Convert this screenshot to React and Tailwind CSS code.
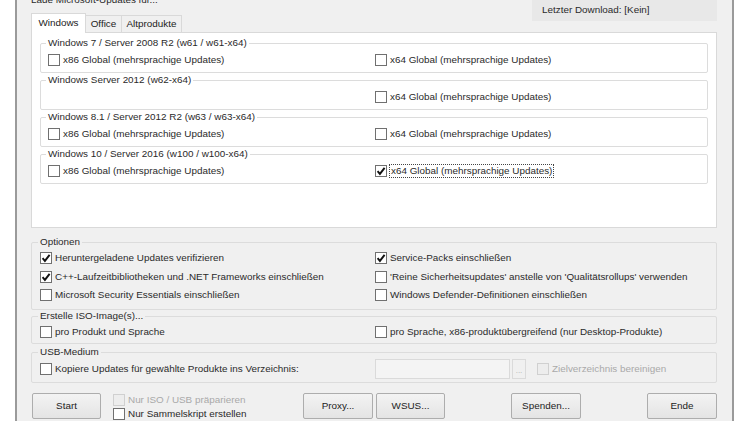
import clsx from 'clsx';

const Check = ({ checked, disabled }) => (
    <span
        className={clsx(
            'flex h-[12px] w-[12px] shrink-0 items-center justify-center border',
            disabled ? 'border-[#d0d0d0] bg-[#ededed]' : 'border-[#707070] bg-white'
        )}
    >
        {checked && (
            <svg width="10" height="10" viewBox="0 0 10 10">
                <path d="M1.6 5.2 L3.9 7.9 L8.6 1.8" fill="none" stroke="#111" strokeWidth="1.9" />
            </svg>
        )}
    </span>
);

const Option = ({ label, checked, disabled, focus, className }) => (
    <div className={clsx('flex h-[14px] items-center gap-[3px]', className)}>
        <Check checked={checked} disabled={disabled} />
        <span
            className={clsx(
                'whitespace-nowrap leading-[12px]',
                disabled ? 'text-[#a9a9a9]' : 'text-[#2a2a2a]',
                focus && '-ml-[1px] border border-dotted border-[#444] px-[1px]'
            )}
        >
            {label}
        </span>
    </div>
);

const OsGroup = ({ title, x86, x64, x64Checked }) => (
    <fieldset className="rounded-[2px] border border-[#dcdcdc] px-[7px] pb-[5px]">
        <legend className="-ml-[2px] px-[2px] leading-[12px] text-[#2a2a2a]">{title}</legend>
        <div className="grid grid-cols-[327px_1fr] pt-[4px]">
            <div>{x86 && <Option label="x86 Global (mehrsprachige Updates)" />}</div>
            <div>{x64 && <Option label="x64 Global (mehrsprachige Updates)" checked={x64Checked} focus={x64Checked} />}</div>
        </div>
    </fieldset>
);

const Group = ({ title, children, className }) => (
    <fieldset className={clsx('rounded-[2px] border border-[#dcdcdc] px-[8px]', className)}>
        <legend className="-ml-[2px] px-[2px] leading-[12px] text-[#2a2a2a]">{title}</legend>
        {children}
    </fieldset>
);

const Button = ({ children, className }) => (
    <button className={clsx('h-[26px] rounded-[2px] border border-[#adadad] bg-linear-to-b from-[#f3f3f3] to-[#e4e4e4] text-[#222]', className)}>
        {children}
    </button>
);

export default function App() {
    return (
        <div className="h-[421px] w-[750px] overflow-hidden bg-white font-['Liberation_Sans',Arial,sans-serif] text-[9.9px]">
            <div className="ml-[15px] h-full w-[719px] border-x-2 border-[#9a9a9a] bg-[#f0f0f0] pl-[14px] pr-[15px]">
                {/* kopfzeile */}
                <div className="flex items-start justify-between">
                    <div className="flex flex-col">
                        <div className="h-[13px]">
                            <div className="-mt-[6px] leading-[12px] text-[#2a2a2a]">Lade Microsoft-Updates für...</div>
                        </div>
                        <div className="flex items-end">
                            <div className="relative z-10 -mb-px flex h-[20px] w-[55px] items-center justify-center border-x border-t border-[#d9d9d9] bg-white text-[#222]">
                                Windows
                            </div>
                            <div className="flex h-[17px] w-[36px] items-center justify-center border-t border-r border-[#d9d9d9] bg-[#f0f0f0] text-[#222]">
                                Office
                            </div>
                            <div className="flex h-[17px] w-[60px] items-center justify-center border-t border-r border-[#d9d9d9] bg-[#f0f0f0] text-[#222]">
                                Altprodukte
                            </div>
                        </div>
                    </div>
                    <div className="flex h-[21px] w-[185px] items-center bg-[#e8e8e8] pl-[10px] text-[#2a2a2a]">
                        Letzter Download: [Kein]
                    </div>
                </div>

                {/* tab inhalt */}
                <div className="flex h-[196px] flex-col gap-[1px] border border-[#d9d9d9] bg-white px-[8px] pt-[4px]">
                    <OsGroup title="Windows 7 / Server 2008 R2 (w61 / w61-x64)" x86 x64 />
                    <OsGroup title="Windows Server 2012 (w62-x64)" x64 />
                    <OsGroup title="Windows 8.1 / Server 2012 R2 (w63 / w63-x64)" x86 x64 />
                    <OsGroup title="Windows 10 / Server 2016 (w100 / w100-x64)" x86 x64 x64Checked />
                </div>

                <Group title="Optionen" className="mt-[8px] pb-[7px]">
                    <div className="grid grid-cols-[335px_1fr] gap-y-[4.5px] pt-[3px]">
                        <Option label="Heruntergeladene Updates verifizieren" checked />
                        <Option label="Service-Packs einschließen" checked />
                        <Option label="C++-Laufzeitbibliotheken und .NET Frameworks einschließen" checked />
                        <Option label="'Reine Sicherheitsupdates' anstelle von 'Qualitätsrollups' verwenden" />
                        <Option label="Microsoft Security Essentials einschließen" />
                        <Option label="Windows Defender-Definitionen einschließen" />
                    </div>
                </Group>

                <Group title="Erstelle ISO-Image(s)..." className="pb-[4px]">
                    <div className="grid grid-cols-[335px_1fr] pt-[3px]">
                        <Option label="pro Produkt und Sprache" />
                        <Option label="pro Sprache, x86-produktübergreifend (nur Desktop-Produkte)" />
                    </div>
                </Group>

                <Group title="USB-Medium" className="mt-[2px] pb-[3px]">
                    <div className="grid grid-cols-[335px_1fr] items-center pt-[1px]">
                        <Option label="Kopiere Updates für gewählte Produkte ins Verzeichnis:" />
                        <div className="flex h-[20px] items-center">
                            <div className="h-[20px] w-[135px] border border-[#dadada] bg-[#f4f4f4]" />
                            <div className="ml-[2px] flex h-[20px] w-[14px] items-end justify-center border border-[#dadada] bg-[#f0f0f0] pb-[3px] text-[8px] leading-none text-[#b0b0b0]">
                                ...
                            </div>
                            <Option label="Zielverzeichnis bereinigen" disabled className="ml-[11px]" />
                        </div>
                    </div>
                </Group>

                {/* knopfleiste */}
                <div className="mt-[10px] flex items-start">
                    <Button className="ml-[1px] w-[69px]">Start</Button>
                    <div className="ml-[12px] flex w-[190px] flex-col">
                        <Option label="Nur ISO / USB präparieren" disabled className="h-[13px]" />
                        <Option label="Nur Sammelskript erstellen" className="h-[13px]" />
                    </div>
                    <Button className="w-[70px]">Proxy...</Button>
                    <Button className="ml-[3px] w-[69px]">WSUS...</Button>
                    <Button className="ml-[66px] w-[70px]">Spenden...</Button>
                    <Button className="ml-auto w-[70px]">Ende</Button>
                </div>
            </div>
        </div>
    );
}
